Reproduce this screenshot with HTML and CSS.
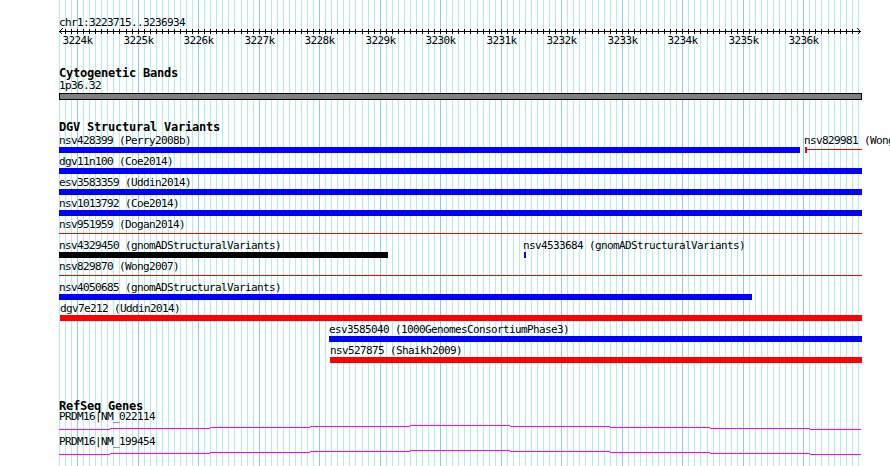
FILE: index.html
```html
<!DOCTYPE html>
<html lang="en">
<head>
<meta charset="utf-8">
<title>chr1:3223715..3236934</title>
<link rel="stylesheet" href="styles.css">
</head>
<body>
<div class="browser">
  <svg class="grid" width="890" height="466" viewBox="0 0 890 466" aria-hidden="true">
    <path class="grid-minor" d="M59.5 0v466M65.5 0v466M71.5 0v466M83.5 0v466M89.5 0v466M95.5 0v466M101.5 0v466M107.5 0v466M113.5 0v466M119.5 0v466M126.5 0v466M132.5 0v466M144.5 0v466M150.5 0v466M156.5 0v466M162.5 0v466M168.5 0v466M174.5 0v466M180.5 0v466M186.5 0v466M192.5 0v466M204.5 0v466M210.5 0v466M216.5 0v466M222.5 0v466M228.5 0v466M234.5 0v466M241.5 0v466M247.5 0v466M253.5 0v466M265.5 0v466M271.5 0v466M277.5 0v466M283.5 0v466M289.5 0v466M295.5 0v466M301.5 0v466M307.5 0v466M313.5 0v466M325.5 0v466M331.5 0v466M337.5 0v466M343.5 0v466M349.5 0v466M355.5 0v466M362.5 0v466M368.5 0v466M374.5 0v466M386.5 0v466M392.5 0v466M398.5 0v466M404.5 0v466M410.5 0v466M416.5 0v466M422.5 0v466M428.5 0v466M434.5 0v466M446.5 0v466M452.5 0v466M458.5 0v466M464.5 0v466M470.5 0v466M477.5 0v466M483.5 0v466M489.5 0v466M495.5 0v466M507.5 0v466M513.5 0v466M519.5 0v466M525.5 0v466M531.5 0v466M537.5 0v466M543.5 0v466M549.5 0v466M555.5 0v466M567.5 0v466M573.5 0v466M579.5 0v466M585.5 0v466M592.5 0v466M598.5 0v466M604.5 0v466M610.5 0v466M616.5 0v466M628.5 0v466M634.5 0v466M640.5 0v466M646.5 0v466M652.5 0v466M658.5 0v466M664.5 0v466M670.5 0v466M676.5 0v466M688.5 0v466M694.5 0v466M700.5 0v466M707.5 0v466M713.5 0v466M719.5 0v466M725.5 0v466M731.5 0v466M737.5 0v466M749.5 0v466M755.5 0v466M761.5 0v466M767.5 0v466M773.5 0v466M779.5 0v466M785.5 0v466M791.5 0v466M797.5 0v466M809.5 0v466M815.5 0v466M821.5 0v466M828.5 0v466M834.5 0v466M840.5 0v466M846.5 0v466M852.5 0v466M858.5 0v466"/>
    <path class="grid-major" d="M77.5 0v466M138.5 0v466M198.5 0v466M259.5 0v466M319.5 0v466M380.5 0v466M440.5 0v466M501.5 0v466M561.5 0v466M622.5 0v466M682.5 0v466M743.5 0v466M803.5 0v466"/>
  </svg>

  <div class="tracks">
    <svg class="ruler" width="804" height="48" viewBox="59 0 804 48">
      <text class="ruler-pos" x="59" y="26">chr1:3223715..3236934</text>
      <path class="ruler-axis" d="M59 31.5H861M62.5 28.5L59.5 31.5L62.5 34.5M857.5 28.5L860.5 31.5L857.5 34.5"/>
      <path class="ruler-ticks" d="M65.5 29v5M71.5 29v5M77.5 29v5M83.5 29v5M89.5 29v5M95.5 29v5M101.5 29v5M107.5 29v5M113.5 29v5M119.5 29v5M126.5 29v5M132.5 29v5M138.5 29v5M144.5 29v5M150.5 29v5M156.5 29v5M162.5 29v5M168.5 29v5M174.5 29v5M180.5 29v5M186.5 29v5M192.5 29v5M198.5 29v5M204.5 29v5M210.5 29v5M216.5 29v5M222.5 29v5M228.5 29v5M234.5 29v5M241.5 29v5M247.5 29v5M253.5 29v5M259.5 29v5M265.5 29v5M271.5 29v5M277.5 29v5M283.5 29v5M289.5 29v5M295.5 29v5M301.5 29v5M307.5 29v5M313.5 29v5M319.5 29v5M325.5 29v5M331.5 29v5M337.5 29v5M343.5 29v5M349.5 29v5M355.5 29v5M362.5 29v5M368.5 29v5M374.5 29v5M380.5 29v5M386.5 29v5M392.5 29v5M398.5 29v5M404.5 29v5M410.5 29v5M416.5 29v5M422.5 29v5M428.5 29v5M434.5 29v5M440.5 29v5M446.5 29v5M452.5 29v5M458.5 29v5M464.5 29v5M470.5 29v5M477.5 29v5M483.5 29v5M489.5 29v5M495.5 29v5M501.5 29v5M507.5 29v5M513.5 29v5M519.5 29v5M525.5 29v5M531.5 29v5M537.5 29v5M543.5 29v5M549.5 29v5M555.5 29v5M561.5 29v5M567.5 29v5M573.5 29v5M579.5 29v5M585.5 29v5M592.5 29v5M598.5 29v5M604.5 29v5M610.5 29v5M616.5 29v5M622.5 29v5M628.5 29v5M634.5 29v5M640.5 29v5M646.5 29v5M652.5 29v5M658.5 29v5M664.5 29v5M670.5 29v5M676.5 29v5M682.5 29v5M688.5 29v5M694.5 29v5M700.5 29v5M707.5 29v5M713.5 29v5M719.5 29v5M725.5 29v5M731.5 29v5M737.5 29v5M743.5 29v5M749.5 29v5M755.5 29v5M761.5 29v5M767.5 29v5M773.5 29v5M779.5 29v5M785.5 29v5M791.5 29v5M797.5 29v5M803.5 29v5M809.5 29v5M815.5 29v5M821.5 29v5M828.5 29v5M834.5 29v5M840.5 29v5M846.5 29v5M852.5 29v5"/>
      <g class="ruler-labels">
        <text x="77.5" y="44">3224k</text>
        <text x="138.5" y="44">3225k</text>
        <text x="198.5" y="44">3226k</text>
        <text x="259.5" y="44">3227k</text>
        <text x="319.5" y="44">3228k</text>
        <text x="380.5" y="44">3229k</text>
        <text x="440.5" y="44">3230k</text>
        <text x="501.5" y="44">3231k</text>
        <text x="561.5" y="44">3232k</text>
        <text x="622.5" y="44">3233k</text>
        <text x="682.5" y="44">3234k</text>
        <text x="743.5" y="44">3235k</text>
        <text x="803.5" y="44">3236k</text>
      </g>
    </svg>

    <section class="track track-cyto">
      <h2 class="track-title">Cytogenetic Bands</h2>
      <div class="label">1p36.32</div>
      <div class="band"></div>
    </section>

    <section class="track track-dgv">
      <h2 class="track-title">DGV Structural Variants</h2>
      <div class="sv-row">
        <div class="feat" style="left:0;width:741px"><span class="label">nsv428399 (Perry2008b)</span><div class="bar blue"></div></div>
        <div class="feat" style="left:745px;width:58px"><span class="label">nsv829981 (Wong2007)</span><div class="cnv"><span class="cnv-tick"></span><span class="cnv-line"></span></div></div>
      </div>
      <div class="sv-row">
        <div class="feat" style="left:0;width:803px"><span class="label">dgv11n100 (Coe2014)</span><div class="bar blue"></div></div>
      </div>
      <div class="sv-row">
        <div class="feat" style="left:0;width:803px"><span class="label">esv3583359 (Uddin2014)</span><div class="bar blue"></div></div>
      </div>
      <div class="sv-row">
        <div class="feat" style="left:0;width:803px"><span class="label">nsv1013792 (Coe2014)</span><div class="bar blue"></div></div>
      </div>
      <div class="sv-row">
        <div class="feat" style="left:0;width:803px"><span class="label">nsv951959 (Dogan2014)</span><div class="bar thin red"></div></div>
      </div>
      <div class="sv-row">
        <div class="feat" style="left:0;width:329px"><span class="label">nsv4329450 (gnomADStructuralVariants)</span><div class="bar black"></div></div>
        <div class="feat" style="left:464px;width:3px"><span class="label">nsv4533684 (gnomADStructuralVariants)</span><div class="bar blue tiny"></div></div>
      </div>
      <div class="sv-row">
        <div class="feat" style="left:0;width:803px"><span class="label">nsv829870 (Wong2007)</span><div class="bar thin red"></div></div>
      </div>
      <div class="sv-row">
        <div class="feat" style="left:0;width:693px"><span class="label">nsv4050685 (gnomADStructuralVariants)</span><div class="bar blue"></div></div>
      </div>
      <div class="sv-row">
        <div class="feat" style="left:1px;width:802px"><span class="label">dgv7e212 (Uddin2014)</span><div class="bar red"></div></div>
      </div>
      <div class="sv-row">
        <div class="feat" style="left:270px;width:533px"><span class="label">esv3585040 (1000GenomesConsortiumPhase3)</span><div class="bar blue"></div></div>
      </div>
      <div class="sv-row">
        <div class="feat" style="left:271px;width:532px"><span class="label">nsv527875 (Shaikh2009)</span><div class="bar red"></div></div>
      </div>
    </section>

    <section class="track track-refseq">
      <h2 class="track-title">RefSeq Genes</h2>
      <div class="gene">
        <div class="label">PRDM16|NM_022114</div>
        <svg class="intron" width="803" height="8" viewBox="59 0 803 8"><path d="M59 6.5H110M110 5.5H210M210 4.5H310M310 3.5H410M410 2.5H510M510 3.5H610M610 4.5H710M710 5.5H810M810 6.5H861"/></svg>
      </div>
      <div class="gene">
        <div class="label">PRDM16|NM_199454</div>
        <svg class="intron" width="803" height="8" viewBox="59 0 803 8"><path d="M59 6.5H110M110 5.5H210M210 4.5H310M310 3.5H410M410 2.5H510M510 3.5H610M610 4.5H710M710 5.5H810M810 6.5H861"/></svg>
      </div>
    </section>
  </div>
</div>
</body>
</html>
```
FILE: styles.css
```css
html, body {
  margin: 0;
  padding: 0;
  background: #ffffff;
}

body {
  font-family: "DejaVu Sans Mono", "Liberation Mono", monospace;
  color: #000000;
}

.browser {
  position: relative;
  width: 890px;
  height: 466px;
  overflow: hidden;
  background: #ffffff;
}

.grid {
  position: absolute;
  top: 0;
  left: 0;
  shape-rendering: crispEdges;
}

.grid-minor {
  stroke: #afeeee;
  stroke-width: 1;
  fill: none;
}

.grid-major {
  stroke: #87ceeb;
  stroke-width: 1;
  fill: none;
}

.tracks {
  position: relative;
  width: 803px;
  padding-left: 59px;
}

/* ruler */
.ruler {
  display: block;
  overflow: visible;
}

.ruler text {
  font-family: "DejaVu Sans Mono", monospace;
  font-size: 11px;
  letter-spacing: -0.62px;
  fill: #000000;
}

.ruler-labels text {
  text-anchor: middle;
}

.ruler-axis,
.ruler-ticks {
  stroke: #000000;
  stroke-width: 1;
  fill: none;
  shape-rendering: crispEdges;
}

/* tracks */
.track-title {
  margin: 0;
  height: 12px;
  font-family: "DejaVu Sans Mono", monospace;
  font-weight: bold;
  font-size: 12px;
  line-height: 12px;
  letter-spacing: -0.225px;
  white-space: nowrap;
}

.label {
  display: block;
  height: 12px;
  font-size: 11px;
  line-height: 12px;
  letter-spacing: -0.62px;
  white-space: nowrap;
}

.track-cyto .track-title {
  margin-top: 19px;
}

.track-cyto .label {
  margin-top: 1px;
}

.band {
  box-sizing: border-box;
  width: 803px;
  height: 7px;
  margin-top: 1px;
  border: 1px solid #000000;
  background: #808080;
}

.track-dgv .track-title {
  margin-top: 21px;
  margin-bottom: 2px;
}

.sv-row {
  position: relative;
  height: 21px;
}

.feat {
  position: absolute;
  top: 0;
}

.bar {
  height: 6px;
}

.bar.thin {
  height: 1px;
  margin-top: 2px;
}

.bar.tiny {
  width: 2px;
  margin-left: 1px;
}

.blue { background: #0000ff; }
.red { background: #ff0000; }
.black { background: #000000; }

.cnv {
  display: flex;
  align-items: flex-start;
  height: 6px;
}

.cnv-tick {
  width: 2px;
  height: 6px;
  margin-left: 1px;
  background: #ff0000;
}

.cnv-line {
  flex: 1;
  height: 1px;
  margin-top: 2px;
  background: #ff0000;
}

.track-refseq .track-title {
  margin-top: 35px;
  margin-bottom: 1px;
  height: 10px;
  line-height: 10px;
}

.gene {
  height: 25px;
}

.gene .label {
  height: 10px;
  line-height: 10px;
  margin-bottom: 1px;
}

.intron {
  display: block;
  shape-rendering: crispEdges;
}

.intron path {
  stroke: #ff00ff;
  stroke-width: 1;
  fill: none;
}
```
